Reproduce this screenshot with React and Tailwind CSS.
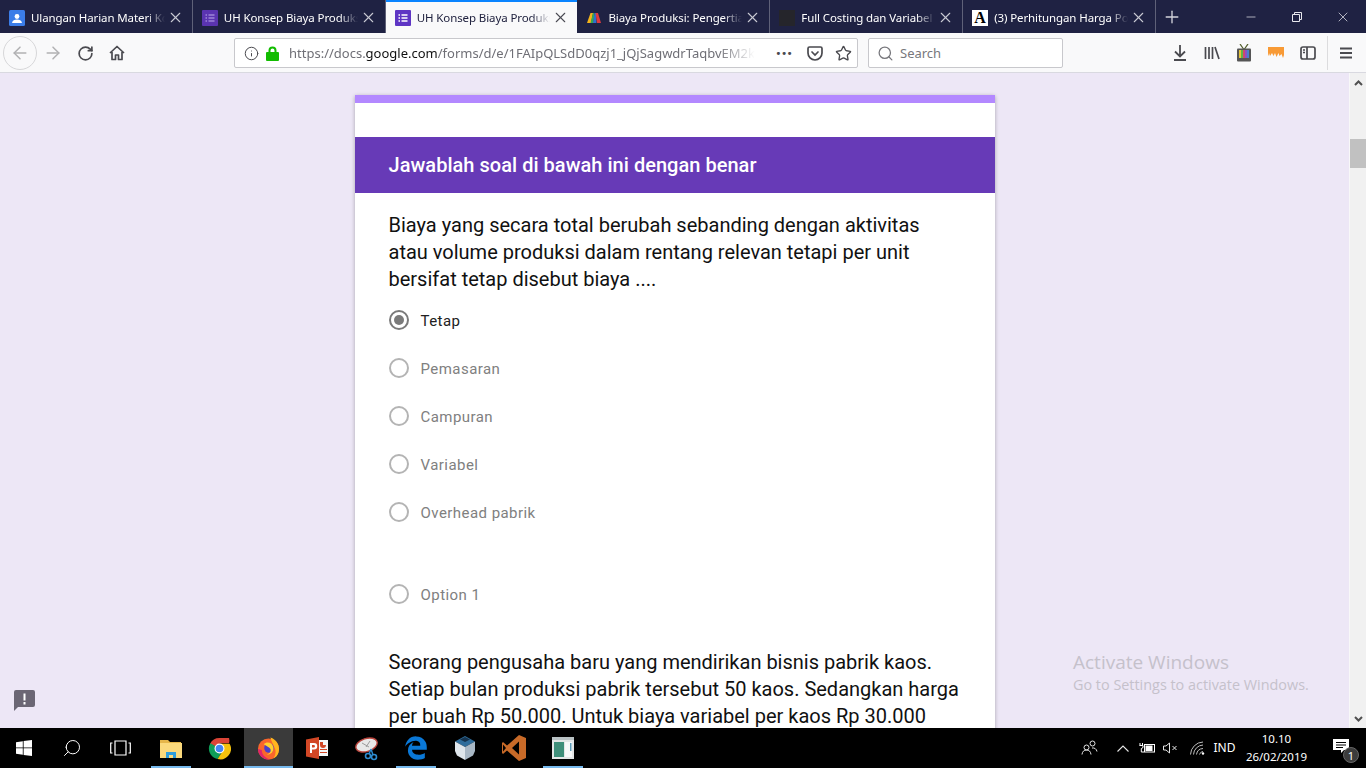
import { ArrowLeft, ArrowRight, RotateCw, Info, Star, Search, X, Plus, Minus } from "lucide-react";
import { FaEdgeLegacy } from "react-icons/fa";

const tabs = [
  { title: "Ulangan Harian Materi Konsep", icon: "classroom" },
  { title: "UH Konsep Biaya Produksi", icon: "forms" },
  { title: "UH Konsep Biaya Produksi", icon: "forms", active: true },
  { title: "Biaya Produksi: Pengertian", icon: "m" },
  { title: "Full Costing dan Variabel Costing", icon: "dark" },
  { title: "(3) Perhitungan Harga Pokok", icon: "a" },
];

const options = ["Tetap", "Pemasaran", "Campuran", "Variabel", "Overhead pabrik"];

const Favicon = ({ type, active }) => {
  if (type === "classroom")
    return (
      <svg width="16" height="16" viewBox="0 0 16 16" className="shrink-0">
        <rect width="16" height="16" rx="1.5" fill="#3b7de8" />
        <circle cx="8" cy="6.500" r="2.400" fill="#fff" />
        <path d="M3 13c.5-2.600 2.500-3.500 5-3.500s4.500.9 5 3.500z" fill="#fff" />
      </svg>
    );
  if (type === "forms")
    return (
      <svg width="16" height="16" viewBox="0 0 16 16" className="shrink-0">
        <rect width="16" height="16" rx="1" fill={active ? "#5e35c4" : "#5a34b0"} />
        <path d="M3.500 5h1.500M6.500 5h6M3.500 8h1.500M6.500 8h6M3.500 11h1.500M6.500 11h6" stroke={active ? "#fff" : "#9d85d8"} strokeWidth="1.500" />
      </svg>
    );
  if (type === "m")
    return (
      <svg width="16" height="16" viewBox="0 0 16 16" className="shrink-0">
        <path d="M1 13 4.500 3H7l-2 10z" fill="#f5b31a" />
        <path d="M4.500 13 7 3h1.500l-1 10z" fill="#36a852" />
        <path d="M7 13 8.500 3h1.500l.5 10z" fill="#2f6fd0" />
        <path d="M9.500 3H12l3 10h-4z" fill="#dd3a3e" />
      </svg>
    );
  if (type === "dark") return <span className="w-4 h-4 shrink-0 bg-[#25252b]" />;
  return (
    <span className="w-4 h-4 shrink-0 bg-white flex items-center justify-center text-black font-bold text-[16px] leading-none font-['Liberation_Serif',serif]">
      A
    </span>
  );
};

const Tab = ({ title, icon, active }) => (
  <div
    className={`flex-1 min-w-0 h-full flex items-center pl-[9px] pr-[8px] gap-[6px] ${
      active ? "bg-[#f9f9fa] text-[#20223f] border-t-2 border-[#0a84ff]" : "text-white border-r border-[#5f6178] pt-[2px]"
    }`}
  >
    <Favicon type={icon} active={active} />
    <span className="flex-1 min-w-0 -mr-[4px] overflow-hidden whitespace-nowrap text-[11.500px] tracking-[-0.1px] [mask-image:linear-gradient(to_right,black_86%,transparent)]">
      {title}
    </span>
    <X className={`w-[17px] h-[17px] shrink-0 ${active ? "text-[#4a4a52]" : "text-[#c9cad3]"}`} strokeWidth={1.500} />
  </div>
);

const Slot = ({ children, className = "w-8" }) => (
  <div className={`h-full shrink-0 flex items-center justify-center ${className}`}>{children}</div>
);

const Radio = ({ label, checked, className = "" }) => (
  <div className={`h-12 flex items-center gap-[12px] ${className}`}>
    <span
      className={`w-5 h-5 rounded-full border-2 flex items-center justify-center ${
        checked ? "border-[#7a7a7a]" : "border-[#b4b4b4]"
      }`}
    >
      {checked && <span className="w-[10px] h-[10px] rounded-full bg-[#7a7a7a]" />}
    </span>
    <span className={`pt-[2px] text-[15px] tracking-[0.45px] ${checked ? "text-[#212121]" : "text-[#808080]"}`}>{label}</span>
  </div>
);

const TaskItem = ({ children, underline, active, className = "w-[49px]" }) => (
  <div className={`h-full shrink-0 relative flex items-center justify-center ${active ? "bg-[#3a3a3a]" : ""} ${className}`}>
    {children}
    {underline && (
      <span className={`absolute bottom-0 h-[2px] bg-[#76b9ed] ${active ? "left-0 right-0" : "left-[5px] right-[4px]"}`} />
    )}
  </div>
);

const App = () => {
  return (
    <div className="w-[1366px] h-[768px] overflow-hidden flex flex-col font-['Roboto',sans-serif]">
      {/* Tab strip */}
      <div className="h-[33px] shrink-0 flex bg-[#1f2243] font-['Noto_Sans',sans-serif]">
        <div className="w-[1156px] flex h-full">
          {tabs.map((t, i) => (
            <Tab key={i} {...t} />
          ))}
        </div>
        <Slot className="w-8">
          <Plus className="w-[20px] h-[20px] text-[#d4d4dc]" strokeWidth={1.600} />
        </Slot>
        <div className="flex-1" />
        <Slot className="w-[46px]">
          <Minus className="w-[14px] h-[14px] text-[#e8e8ee]" strokeWidth={1.200} />
        </Slot>
        <Slot className="w-[46px]">
          <svg width="10" height="10" viewBox="0 0 10 10" fill="none" stroke="#e8e8ee">
            <path d="M.5 2.500h7v7h-7zM2.500 2.500v-2h7v7h-2" />
          </svg>
        </Slot>
        <Slot className="w-[46px]">
          <X className="w-[16px] h-[16px] text-[#e8e8ee]" strokeWidth={1.100} />
        </Slot>
      </div>

      {/* Nav bar */}
      <div className="h-[40px] shrink-0 pt-[1px] flex items-center bg-[#f9f9fa] border-b border-[#d9d9e0] text-[#4a4a4f]">
        <div className="ml-[3px] w-[34px] h-[34px] shrink-0 rounded-full border border-[#d7d7d9] flex items-center justify-center">
          <ArrowLeft className="w-[20px] h-[20px] text-[#b1b1b3]" strokeWidth={1.800} />
        </div>
        <Slot>
          <ArrowRight className="w-[20px] h-[20px] text-[#b1b1b3]" strokeWidth={1.800} />
        </Slot>
        <Slot>
          <RotateCw className="w-[17px] h-[17px]" strokeWidth={2.400} />
        </Slot>
        <Slot>
          <svg width="16" height="16" viewBox="0 0 16 16" fill="none" stroke="#4a4a4f" strokeWidth="1.700" strokeLinejoin="round">
            <path d="M1 8 8 1.500 15 8M3 7v7.500h3.500V10h3v4.500H13V7" />
          </svg>
        </Slot>
        <div className="w-[101px] shrink-0" />
        <div className="w-[624px] h-[30px] shrink-0 bg-white border border-[#c8c8cc] rounded-[2px] flex items-center">
          <Info className="ml-[9px] w-[15px] h-[15px] shrink-0" strokeWidth={1.600} />
          <svg width="13" height="15" viewBox="0 0 13 15" className="ml-[7px] shrink-0">
            <path d="M3.500 7V4.500a3 3 0 0 1 6 0V7" fill="none" stroke="#12bc00" strokeWidth="2" />
            <rect y="6" width="13" height="9" rx="1" fill="#12bc00" />
          </svg>
          <span className="ml-[10px] pt-[2px] w-[466px] overflow-hidden whitespace-nowrap text-[13px] text-[#6f6f76] font-['Noto_Sans',sans-serif] [mask-image:linear-gradient(to_right,black_92%,transparent)]">
            https://docs.<span className="text-[#111]">google.com</span>/forms/d/e/1FAIpQLSdD0qzj1_jQjSagwdrTaqbvEM2kT
          </span>
          <div className="flex-1" />
          <span className="text-[#4a4a4f] font-bold text-[13px] leading-none tracking-[1px] mr-[14px]">•••</span>
          <svg width="16" height="15" viewBox="0 0 16 15" fill="none" stroke="#4a4a4f" strokeWidth="1.700" className="mr-[12px]">
            <path d="M2.500 1h11A1.500 1.500 0 0 1 15 2.500V7A7 7 0 0 1 1 7V2.500A1.500 1.500 0 0 1 2.500 1z" />
            <path d="m5 6 3 3 3-3" strokeLinecap="round" />
          </svg>
          <Star className="w-[17px] h-[17px] mr-[5px]" strokeWidth={1.900} />
        </div>
        <div className="w-[10px] shrink-0" />
        <div className="w-[195px] h-[30px] shrink-0 bg-white border border-[#c8c8cc] rounded-[2px] flex items-center">
          <Search className="ml-[8px] w-[17px] h-[17px] text-[#77777c]" strokeWidth={1.800} />
          <span className="ml-[6px] pt-[2px] text-[13px] text-[#77777c] font-['Noto_Sans',sans-serif]">Search</span>
        </div>
        <div className="w-[101px] shrink-0" />
        <Slot>
          <svg width="14" height="16" viewBox="0 0 14 16" fill="none" stroke="#4a4a4f" strokeWidth="1.800">
            <path d="M7 0v11M2 6.500 7 11.500 12 6.500M1 15h12" />
          </svg>
        </Slot>
        <Slot>
          <svg width="16" height="14" viewBox="0 0 16 14" fill="none" stroke="#4a4a4f" strokeWidth="1.700">
            <path d="M1.500 1v12M5 1v12M8.500 1v12M11 1l4 12" />
          </svg>
        </Slot>
        <Slot>
          <svg width="16" height="18" viewBox="0 0 16 18">
            <path d="M4 0l3.500 5M12 0 8.500 5" stroke="#55612f" strokeWidth="1.300" />
            <rect x="1" y="4.500" width="14" height="13" rx="1" fill="#555" />
            <rect x="3" y="6" width="2" height="8" fill="#e5c33a" />
            <rect x="5" y="6" width="2" height="8" fill="#5fb548" />
            <rect x="7" y="6" width="2" height="8" fill="#d0486e" />
            <rect x="9" y="6" width="2" height="8" fill="#8c51c4" />
            <rect x="11" y="6" width="2" height="8" fill="#4a7fd0" />
          </svg>
        </Slot>
        <Slot>
          <svg width="16" height="12" viewBox="0 0 16 12">
            <path d="M0 0h16v8l-1 3-1.500-4-2 2-1-3-2 4-1.500-4-1.500 3L4 6 2 9 1 6 .5 9 0 8z" fill="#f89a35" />
          </svg>
        </Slot>
        <Slot>
          <svg width="16" height="14" viewBox="0 0 16 14" fill="none" stroke="#4a4a4f" strokeWidth="1.700">
            <rect x="1" y="1" width="14" height="12" rx="2" />
            <path d="M7 1v12M3 4h2M3 6.500h2" />
          </svg>
        </Slot>
        <div className="w-[3px] shrink-0" />
        <div className="w-px h-[34px] shrink-0 bg-[#dcdcde]" />
        <Slot className="w-9">
          <svg width="12" height="12" viewBox="0 0 12 12" stroke="#4a4a4f" strokeWidth="1.800">
            <path d="M0 1.500h12M0 6h12M0 10.500h12" />
          </svg>
        </Slot>
      </div>

      {/* Page */}
      <div className="flex-1 min-h-0 relative flex bg-[#ede7f6] overflow-hidden">
        <div className="flex-1 min-w-0 flex justify-center items-start pt-[22px]">
          <div className="w-[640px] shrink-0 bg-white shadow-[0_1px_4px_rgba(0,0,0,0.3)]">
            <div className="h-2 bg-[#b388ff]" />
            <div className="h-[34px]" />
            <div className="h-14 bg-[#673ab7] flex items-center px-[34px] text-white text-[20px] font-medium tracking-[0.03px]">
              Jawablah soal di bawah ini dengan benar
            </div>
            <div className="px-[34px] pt-[19px] pb-10">
              <p className="text-[20px] leading-[27px] text-[#111] w-[560px]">
                Biaya yang secara total berubah sebanding dengan aktivitas atau volume produksi dalam rentang relevan tetapi per unit bersifat tetap disebut biaya ....
              </p>
              <div className="mt-[3px]">
                {options.map((o, i) => (
                  <Radio key={o} label={o} checked={i === 0} />
                ))}
              </div>
              <Radio label="Option 1" className="mt-[34px]" />
              <p className="mt-[31px] text-[20px] leading-[27px] text-[#111] w-[572px]">
                Seorang pengusaha baru yang mendirikan bisnis pabrik kaos. Setiap bulan produksi pabrik tersebut 50 kaos. Sedangkan harga per buah Rp 50.000. Untuk biaya variabel per kaos Rp 30.000
              </p>
            </div>
          </div>
        </div>

        {/* Scrollbar */}
        <div className="w-[17px] shrink-0 bg-[#f1f1f1] border-l border-[#f8f8f8] flex flex-col items-center">
          <svg width="9" height="6" viewBox="0 0 9 6" fill="none" stroke="#505050" strokeWidth="2" className="mt-[7px]">
            <path d="m1 5 3.500-3.500L8 5" />
          </svg>
          <div className="w-full h-[29px] mt-[53px] bg-[#c1c1c1]" />
          <div className="flex-1" />
          <svg width="9" height="6" viewBox="0 0 9 6" fill="none" stroke="#505050" strokeWidth="2" className="mb-[6px]">
            <path d="m1 1 3.500 3.500L8 1" />
          </svg>
        </div>

        {/* Floating over the page */}
        <svg width="21" height="21" viewBox="0 0 21 21" className="absolute left-[14px] top-[617px]">
          <path d="M2 0h17a2 2 0 0 1 2 2v13a2 2 0 0 1-2 2H4l-4 4V2a2 2 0 0 1 2-2z" fill="#6b6674" />
          <path d="M9.500 3.500h2v7h-2zM9.500 12h2v2.500h-2z" fill="#fff" />
        </svg>
        <div className="absolute left-[1073px] top-[577px] text-[#c5c1cb] font-['Open_Sans',sans-serif]">
          <div className="text-[19px] leading-[25px]">Activate Windows</div>
          <div className="text-[14.400px] leading-[20px]">Go to Settings to activate Windows.</div>
        </div>
      </div>

      {/* Taskbar */}
      <div className="h-[40px] shrink-0 bg-black flex items-center text-white font-['Noto_Sans',sans-serif]">
        <TaskItem className="w-12">
          <svg width="16" height="16" viewBox="0 0 16 16" fill="#fff">
            <path d="M0 2.200 6.800 1.200v6.300H0zM7.600 1.100 16 0v7.500H7.600zM0 8.300h6.800v6.500L0 13.800zM7.600 8.300H16V16l-8.400-1.100z" />
          </svg>
        </TaskItem>
        <TaskItem className="w-12">
          <Search className="w-[20px] h-[20px] -scale-x-100" strokeWidth={1.200} />
        </TaskItem>
        <TaskItem className="w-12">
          <svg width="21" height="16" viewBox="0 0 21 16" fill="none" stroke="#fff" strokeWidth="1.200">
            <path d="M5 1h11v14H5zM2.500 3H.700v10h1.800M18.500 3h1.800v10h-1.800" />
          </svg>
        </TaskItem>
        <div className="w-[2px] shrink-0" />
        <TaskItem underline>
          <svg width="22" height="20" viewBox="0 0 22 20">
            <path d="M0 2h8l2 2h11v4H0z" fill="#e6b64a" />
            <rect y="5" width="22" height="15" fill="#fbd97c" />
            <path d="M6 20v-6h10v6h-3v-3H9v3z" fill="#2f9ddb" />
          </svg>
        </TaskItem>
        <TaskItem>
          <svg width="23" height="23" viewBox="0 0 24 24">
            <path d="M12 12 2.100 7A11 11 0 0 1 12 1h10a11 11 0 0 1 0 5.500H12z" fill="#db4437" />
            <path d="M2.500 6.500A11 11 0 0 0 10 23l5-8-3-3z" fill="#0f9d58" />
            <path d="M22.500 7H12l3 8-5 8A11 11 0 0 0 22.500 7z" fill="#f4c20d" />
            <circle cx="12" cy="12" r="5.200" fill="#fff" />
            <circle cx="12" cy="12" r="4" fill="#4285f4" />
          </svg>
        </TaskItem>
        <TaskItem underline active>
          <svg width="23" height="24" viewBox="0 0 24 24">
            <circle cx="12" cy="13" r="11" fill="#f9662c" />
            <path d="M1 13a11 11 0 0 0 13 10.800C9 23 5 19 5 14z" fill="#e2246a" />
            <path d="M14 1c6 2 9 7 9 12 0 5-3 9-6 10 3-4 3-9 1-12-1-3-3-6-4-10z" fill="#ffb51f" />
            <circle cx="12.500" cy="12" r="5" fill="#4b3fc8" />
            <path d="M7 8c3-3 9-2 10 3 1 5-3 8-7 8 3-1 5-3 4-6-1-2-4-3-7-5z" fill="#ffd02e" />
          </svg>
        </TaskItem>
        <TaskItem>
          <svg width="23" height="22" viewBox="0 0 23 22">
            <path d="M0 2.500 13 0v22L0 19.500z" fill="#d24726" />
            <rect x="13" y="3" width="9" height="16" fill="#f5f5f5" />
            <path d="M14 5h3v3h3a3 3 0 0 1-6 0zM14 12h7v1h-7zM14 15h7v1h-7z" fill="#d24726" />
            <path d="M4 6h4a2.500 2.500 0 0 1 0 6.500H6V16H4zM6 8v2.500h1.700a1.200 1.200 0 0 0 0-2.500z" fill="#fff" />
          </svg>
        </TaskItem>
        <TaskItem>
          <svg width="24" height="25" viewBox="0 0 24 25">
            <ellipse cx="11.500" cy="9" rx="11" ry="6.500" transform="rotate(-18 11.500 9)" fill="#e8e8e8" stroke="#b8443c" strokeWidth="1.400" />
            <path d="M7 7l7 4M15 5l-4 6" stroke="#9b9b9b" strokeWidth="1" />
            <circle cx="13" cy="20" r="2.500" fill="none" stroke="#2d8bd0" strokeWidth="1.600" />
            <circle cx="19" cy="21" r="2.500" fill="none" stroke="#2d8bd0" strokeWidth="1.600" />
            <path d="M14 18l2-5M18 19l-2-6" stroke="#2d8bd0" strokeWidth="1.400" />
          </svg>
        </TaskItem>
        <TaskItem underline>
          <FaEdgeLegacy className="w-[24px] h-[24px] text-[#0a78d7]" />
        </TaskItem>
        <TaskItem>
          <svg width="20" height="24" viewBox="0 0 20 24">
            <path d="M10 0 20 5.500 10 11 0 5.500z" fill="#2f6d9c" />
            <path d="M0 5.500 10 11v13L2 19.500 0 15z" fill="#dfe6ec" />
            <path d="M20 5.500 10 11v13l8-4.500 2-4.500z" fill="#a9b8c6" />
            <path d="M5 3.500 10 1l5 2.500L10 6z" fill="#15334e" />
          </svg>
        </TaskItem>
        <TaskItem>
          <svg width="24" height="26" viewBox="0 0 24 26">
            <path d="M17 0 24 3v20l-7 3L5 15.500 1 19l-1-1V8l1-1 4 3.500z" fill="#c86a28" />
            <path d="M17 6.500 10 13l7 6.500z" fill="#000" />
            <path d="M1 9.500 4 13l-3 3.500z" fill="#000" />
          </svg>
        </TaskItem>
        <TaskItem underline>
          <svg width="22" height="22" viewBox="0 0 22 22">
            <rect width="22" height="22" fill="#e3e6e6" />
            <rect y="0" width="22" height="3" fill="#b9c2c4" />
            <rect x="2" y="5" width="10" height="15" fill="#3f8f7a" />
            <rect x="13" y="5" width="7" height="15" fill="#f7f9f9" />
            <rect x="18" y="6" width="1.500" height="8" fill="#5c9bb8" />
          </svg>
        </TaskItem>

        <div className="flex-1" />

        <Slot className="w-8">
          <svg width="17" height="16" viewBox="0 0 17 16" fill="none" stroke="#e6e6e6" strokeWidth="1">
            <circle cx="5.500" cy="7.500" r="2.500" />
            <path d="M1 14.500c.3-3 2-4.500 4.500-4.500s4.200 1.500 4.500 4.500" />
            <circle cx="11.500" cy="3.500" r="2.500" />
            <path d="M11 8c2.500-.5 4.500 1 5 3.500" />
          </svg>
        </Slot>
        <div className="w-[6px] shrink-0" />
        <Slot className="w-6">
          <svg width="12" height="7" viewBox="0 0 12 7" fill="none" stroke="#e6e6e6" strokeWidth="1.100">
            <path d="m.5 6.500 5.500-5.500 5.500 5.500" />
          </svg>
        </Slot>
        <Slot className="w-6">
          <svg width="16" height="10" viewBox="0 0 16 10">
            <rect x="5.500" y="1.500" width="10" height="7.500" fill="none" stroke="#fff" />
            <rect x="6.500" y="2.500" width="7" height="5.500" fill="#fff" />
            <path d="M1 0v2.500M3.500 0v2.500M.5 2.500H4V4a1.700 1.700 0 0 1-1.700 1.500V9H5" stroke="#fff" fill="none" />
          </svg>
        </Slot>
        <Slot className="w-[23px]">
          <svg width="15" height="12" viewBox="0 0 15 12" fill="none" stroke="#e6e6e6">
            <path d="M.5 4h2.500L6.500 1v10L3 8H.500zM9.500 4l4 4M13.500 4l-4 4" />
          </svg>
        </Slot>
        <div className="w-[3px] shrink-0" />
        <Slot className="w-6">
          <svg width="15" height="14" viewBox="0 0 15 14" fill="none" stroke="#bdbdbd">
            <path d="M.5 13.500A13 13 0 0 1 13 1M3.500 13.500A10 10 0 0 1 13 4M6.500 13.500A7 7 0 0 1 13 7.500M9.500 13.500A4 4 0 0 1 13 10.500" />
            <circle cx="13" cy="12.500" r="1.200" fill="#fff" stroke="none" />
          </svg>
        </Slot>
        <Slot className="w-[31px]">
          <span className="text-[12px]">IND</span>
        </Slot>
        <div className="w-[73px] h-full shrink-0 flex flex-col items-center justify-center text-[11.500px] leading-[18px]">
          <span>10.10</span>
          <span>26/02/2019</span>
        </div>
        <Slot className="w-[5px]" />
        <div className="w-12 h-full shrink-0 relative flex items-center justify-center">
          <svg width="16" height="15" viewBox="0 0 16 15" className="-mt-[3px] -ml-[3px]">
            <path d="M0 0h16v11h-5l-3 3v-3H0z" fill="#fff" />
            <path d="M3 3.500h10M3 6h10M3 8.500h7" stroke="#000" />
          </svg>
          <span className="absolute left-[25px] top-[19px] w-4 h-4 rounded-full bg-[#3c3c3c] border border-[#666] flex items-center justify-center text-[11px] leading-none">
            1
          </span>
        </div>
      </div>
    </div>
  );
};

export default App;
